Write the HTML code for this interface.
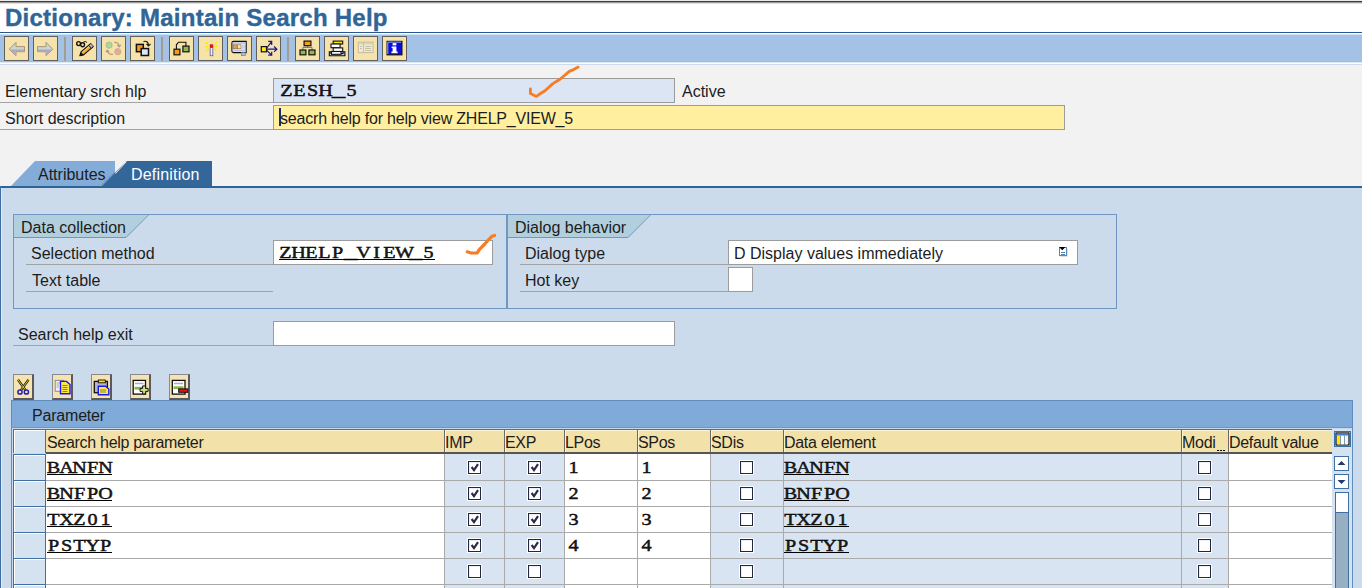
<!DOCTYPE html>
<html><head><meta charset="utf-8">
<style>
html,body{margin:0;padding:0}
body{width:1362px;height:588px;position:relative;overflow:hidden;background:#f2f2f2;font-family:"Liberation Sans",sans-serif;font-size:16px;color:#1c1c1c}
.a{position:absolute}
.t{position:absolute;line-height:20px;white-space:nowrap}
.m{position:absolute;line-height:20px;white-space:nowrap;font-family:"Liberation Serif",serif;font-weight:normal;font-size:17.5px;-webkit-text-stroke:0.45px #000}
.m span{display:inline-block;width:13px;text-align:center;transform:scaleX(1.15)}
.m span.us{transform:scaleX(1.5)}
.mu{position:absolute;height:1px;background:#000}
.u{text-decoration:underline;text-underline-offset:2px;text-decoration-thickness:1px}
.btn{position:absolute;top:36px;width:23px;height:23px;border:1px solid #5f5f5f;background:#f5e3ab}
.btn svg{position:absolute;left:0;top:0}
.sep{position:absolute;top:37px;width:2px;height:24px;background:#a39c93}
.ul{position:absolute;height:1px;background:#a3a3a3}
.fld{position:absolute;box-sizing:border-box;border:1px solid #9c9c9c;background:#fff}
.gb{position:absolute;box-sizing:border-box;border:1px solid #6f97c1}
.tb{position:absolute;top:374px;width:19px;height:24px;border-top:1px solid #8a8a8a;border-left:1px solid #8a8a8a;border-right:2px solid #5a5a5a;border-bottom:2px solid #5a5a5a;background:#f5e3b5;box-sizing:content-box;width:18px;height:23px}
</style></head><body>
<!-- title bar -->
<div class="a" style="left:0;top:0;width:1362px;height:32px;background:#fff"></div>
<div class="a" style="left:0;top:0;width:1362px;height:1px;background:#ececec"></div>
<div class="a" style="left:0;top:1px;width:1362px;height:1px;background:#3c3c3c"></div>
<div class="a" style="left:0;top:2px;width:1362px;height:1px;background:#9c9c9c"></div>
<div class="a" style="left:0;top:3px;width:1362px;height:1px;background:#dedede"></div>
<div class="t" style="left:5px;top:4px;font-size:24px;line-height:28px;font-weight:bold;color:#2f6597;letter-spacing:0.25px;-webkit-text-stroke:0.4px #2f6597">Dictionary: Maintain Search Help</div>
<div class="a" style="left:0;top:32px;width:1362px;height:1px;background:#235890"></div>
<div class="a" style="left:0;top:33px;width:1362px;height:1px;background:#ffffff"></div>
<div class="a" style="left:0;top:34px;width:1362px;height:1px;background:#d0ddee"></div>
<div class="a" style="left:0;top:35px;width:1362px;height:26px;background:#a4c2e6"></div>
<div class="a" style="left:0;top:61px;width:1362px;height:1px;background:#a0bee3"></div>
<div class="a" style="left:0;top:62px;width:1362px;height:1px;background:#dde8f3"></div>
<div class="a" style="left:0;top:63px;width:1362px;height:1px;background:#ffffff"></div>
<div class="a" style="left:0;top:64px;width:1362px;height:1px;background:#cddbea"></div>

<!-- toolbar -->
<div class="btn" style="left:4px"><svg width="23" height="23" viewBox="0 0 23 23"><path d="M4.2 12.2 L11 5.3 V9.6 H19.5 V14.7 H11 V18.7 Z" fill="#c8d8c4" stroke="#a8987a" stroke-width="1"/><path d="M5 12.4 L10.5 17.9 V14.2 H19 V12.4 Z" fill="#b4a4cc"/></svg></div>
<div class="btn" style="left:33px"><svg width="23" height="23" viewBox="0 0 23 23"><path d="M18.8 12.2 L12 5.3 V9.6 H3.5 V14.7 H12 V18.7 Z" fill="#c8d8c4" stroke="#a8987a" stroke-width="1"/><path d="M18 12.4 L12.5 17.9 V14.2 H4 V12.4 Z" fill="#b4a4cc"/></svg></div>
<div class="btn" style="left:72px"><svg width="23" height="23" viewBox="0 0 23 23"><path d="M6.8 18.8 L8 14.9 L17.6 6.6 L20.2 9.6 L10.6 17.9 Z" fill="#f6a623" stroke="#111" stroke-width="1.1" stroke-linejoin="round"/><path d="M6.8 18.8 L8 14.9 L10.6 17.9 Z" fill="#111"/><path d="M9 15.6 L17.8 8" stroke="#ffd890" stroke-width="0.9"/><path d="M15.8 8.2 L17.6 6.6 L20.2 9.6 L18.4 11.2 Z" fill="#c0c8f0" stroke="#111" stroke-width="1"/><path d="M17.6 6.6 L20.2 9.6 L20.8 9 L18.2 6Z" fill="#f08080"/><ellipse cx="5.6" cy="6.6" rx="1.9" ry="2" fill="none" stroke="#111" stroke-width="1.4"/><ellipse cx="9.6" cy="7.8" rx="1.9" ry="2" fill="none" stroke="#111" stroke-width="1.4"/><path d="M10.5 5 Q12.5 3.8 14 5.5" fill="none" stroke="#111" stroke-width="1"/></svg></div>
<div class="btn" style="left:101px"><svg width="23" height="23" viewBox="0 0 23 23"><circle cx="7.1" cy="8.1" r="3.1" fill="#a8dc90" stroke="#b8b098" stroke-width="0.9"/><circle cx="15.8" cy="14.7" r="3.1" fill="#f0a890" stroke="#b8b098" stroke-width="0.9"/><path d="M12.3 5.4 Q16.8 5 17.1 9.2 M15.4 7.9 L17.1 9.8 L18.8 7.9 M10.9 17.4 Q5.8 17.6 5.4 13.8 M3.8 15.2 L5.4 13.3 L7 15.2" fill="none" stroke="#a89c80" stroke-width="1.2"/></svg></div>
<div class="btn" style="left:130px"><svg width="23" height="23" viewBox="0 0 23 23"><rect x="5.4" y="7.4" width="6.9" height="7.3" fill="#f69a1a" stroke="#111" stroke-width="1.5"/><rect x="10.2" y="11.6" width="7.3" height="6.9" fill="#dce8f8" stroke="#111" stroke-width="1.5"/><path d="M12.5 4.5 Q17 3 17.5 8.5 M15.5 6.8 L17.5 9 L19.5 6.8" fill="none" stroke="#111" stroke-width="1.1"/></svg></div>
<div class="btn" style="left:169px"><svg width="23" height="23" viewBox="0 0 23 23"><rect x="4" y="12.2" width="5.9" height="5.6" fill="#f39a1e" stroke="#111" stroke-width="1.2"/><rect x="12.9" y="9.1" width="6.1" height="5.7" fill="#8cba52" stroke="#111" stroke-width="1.2"/><path d="M6.4 12.2 V7.8 L8.5 5.2 H15.9 V9.1" fill="none" stroke="#111" stroke-width="1.1"/></svg></div>
<div class="btn" style="left:198px"><svg width="23" height="23" viewBox="0 0 23 23"><path d="M12.5 3.5 V6.5 M7 5 L9.3 7.3 M18 5 L15.7 7.3 M6.5 9.5 H9.5 M15.5 9.5 H18.5 M7.5 13.8 L9.7 11.8 M17.5 13.8 L15.3 11.8" stroke="#ffea00" stroke-width="1.3"/><rect x="11.2" y="7.8" width="2.6" height="10.9" fill="#f0f0ff" stroke="#6a6aa0" stroke-width="0.9"/><rect x="11" y="7.6" width="3" height="3.3" fill="#e81010"/></svg></div>
<div class="btn" style="left:227px"><svg width="23" height="23" viewBox="0 0 23 23"><path d="M5.5 4.4 H18.2 V15.6 H5.5 Q3.9 15.6 3.9 14 V6 Q3.9 4.4 5.5 4.4Z" fill="#eef2fa" stroke="#111" stroke-width="1.1"/><rect x="4.8" y="5.3" width="12.6" height="1.8" fill="#b8c4e0"/><rect x="5.2" y="7.8" width="3.9" height="3.9" fill="#f0a040" stroke="#8a6a40" stroke-width="0.6"/><rect x="9.6" y="7.8" width="3.4" height="3.9" fill="#f4e0b0" stroke="#8a6a40" stroke-width="0.6"/><rect x="13.6" y="7.8" width="3.4" height="3.9" fill="#c8d0f0"/><rect x="4.8" y="12.5" width="12.6" height="2" fill="#b8c4e0"/><rect x="13.4" y="15.6" width="3.9" height="3.1" fill="#a8b8e0" stroke="#6a7aa0" stroke-width="0.6"/></svg></div>
<div class="btn" style="left:256px"><svg width="23" height="23" viewBox="0 0 23 23"><rect x="4.3" y="9.6" width="5.2" height="5.2" fill="#ffee10" stroke="#111" stroke-width="1.2"/><path d="M9.5 12.2 H19.9 M17 9.5 L19.9 12.2 L17 14.9 M9.8 11 L14.7 4.4 M11.2 4.4 H14.7 V8 M9.8 13.4 L14.7 18.2 M11.2 18.2 H14.7 V14.7" fill="none" stroke="#1a1a90" stroke-width="1.2"/></svg></div>
<div class="btn" style="left:295px"><svg width="23" height="23" viewBox="0 0 23 23"><path d="M11.5 8.7 V10.4 M6.9 13 V10.4 H16 V13" fill="none" stroke="#777" stroke-width="1"/><rect x="8.1" y="4.1" width="6.8" height="4.6" fill="#f3a020" stroke="#111" stroke-width="1.2"/><rect x="4" y="13" width="5.9" height="4.8" fill="#8cba52" stroke="#111" stroke-width="1.2"/><rect x="12.9" y="13" width="6.1" height="4.8" fill="#8cba52" stroke="#111" stroke-width="1.2"/></svg></div>
<div class="btn" style="left:324px"><svg width="23" height="23" viewBox="0 0 23 23"><path d="M4.3 14.8 H6 V16.5 H18 V14.8 H19.9 V18.7 H4.3 Z" fill="#9fd0f0" stroke="#111" stroke-width="1.1"/><rect x="8.2" y="4.1" width="9.5" height="2.9" fill="#ffe800" stroke="#111" stroke-width="1.1"/><rect x="6" y="7" width="9.1" height="3.7" fill="#fff" stroke="#111" stroke-width="1.1"/><rect x="8.2" y="10.9" width="9.5" height="3.6" fill="#fff" stroke="#111" stroke-width="1.1"/><rect x="6.5" y="14.5" width="9.5" height="2.8" fill="#fff" stroke="#111" stroke-width="1.1"/></svg></div>
<div class="btn" style="left:353px"><svg width="23" height="23" viewBox="0 0 23 23"><rect x="4.3" y="5.2" width="14.7" height="10.4" fill="#f2e8cc" stroke="#c4baa0" stroke-width="1"/><path d="M4.8 6.8 H18.5" stroke="#c8d4d0" stroke-width="1.2"/><path d="M9.5 5.2 V15.6 M11 9.5 H17 M11 11.5 H17 M11 13.5 H17 M6 9.5 H8 M6 11.5 H8" stroke="#c4baa0" stroke-width="0.9"/></svg></div>
<div class="btn" style="left:382px"><svg width="23" height="23" viewBox="0 0 23 23"><rect x="4.1" y="4.4" width="14.8" height="13.4" fill="#0a0ae0" stroke="#111" stroke-width="1.2"/><path d="M4.8 5.1 H18.2 M4.8 5.1 V17" stroke="#a0c8f0" stroke-width="0.9"/><rect x="9.6" y="6.1" width="3.8" height="2.3" fill="#fff"/><path d="M8.6 9.6 H13.4 V14.6 H14.6 V16.2 H8.4 V14.6 H9.6 V11 H8.6Z" fill="#fff"/></svg></div>
<div class="sep" style="left:64px"></div>
<div class="sep" style="left:161px"></div>
<div class="sep" style="left:287px"></div>


<!-- header fields -->
<div class="t" style="left:5px;top:82px">Elementary srch hlp</div>
<div class="ul" style="left:0;top:102px;width:273px"></div>
<div class="t" style="left:5px;top:109px">Short description</div>
<div class="ul" style="left:0;top:129px;width:273px"></div>
<div class="fld" style="left:273px;top:78px;width:402px;height:25px;background:#dbe5f3"></div>
<div class="m" style="left:280px;top:80px"><span>Z</span><span>E</span><span>S</span><span>H</span><span class="us">_</span><span>5</span></div>
<div class="t" style="left:682px;top:82px">Active</div>
<div class="fld" style="left:273px;top:105px;width:792px;height:25px;background:#ffef9f"></div>
<div class="a" style="left:279px;top:108px;width:2px;height:18px;background:#1c2a7a"></div>
<div class="t" style="left:280px;top:109px;letter-spacing:-0.2px">seacrh help for help view ZHELP_VIEW_5</div>

<!-- tabs -->
<svg class="a" style="left:0;top:160px" width="230" height="30">
<polygon points="11,26 35,1 115,1 115,26" fill="#83acd9"/>
<polygon points="102,26 126.5,1 212,1 212,26" fill="#336699"/>
<line x1="115.5" y1="13.5" x2="126.5" y2="1.5" stroke="#fff" stroke-width="1" opacity="0.9"/>
<line x1="101.5" y1="25" x2="113.5" y2="13" stroke="#3a4a60" stroke-width="0.8" stroke-dasharray="1 1" opacity="0.7"/>
</svg>
<div class="t" style="left:38px;top:165px">Attributes</div>
<div class="t" style="left:131px;top:165px;color:#fff;letter-spacing:0.2px">Definition</div>

<!-- content area -->
<div class="a" style="left:0;top:186px;width:1362px;height:402px;background:#ccdbeb"></div>
<div class="a" style="left:0;top:186px;width:1362px;height:2px;background:#2f6595"></div>
<div class="a" style="left:0;top:186px;width:1px;height:402px;background:#3f70a2"></div><div class="a" style="left:1px;top:188px;width:1px;height:400px;background:#dfe8f3"></div>

<!-- group 1 -->
<div class="gb" style="left:13px;top:214px;width:494px;height:95px"></div>
<svg class="a" style="left:13px;top:214px" width="200" height="26">
<polygon points="1,1 135,1 113,23.5 1,23.5" fill="#b2cfdd"/>
<polyline points="0,23.5 113,23.5 135.5,1" fill="none" stroke="#6f97c1" stroke-width="1"/>
</svg>
<div class="t" style="left:21px;top:218px">Data collection</div>
<div class="t" style="left:31px;top:244px">Selection method</div>
<div class="ul" style="left:26px;top:264px;width:247px"></div>
<div class="t" style="left:32px;top:271px">Text table</div>
<div class="ul" style="left:26px;top:291px;width:247px"></div>
<div class="fld" style="left:273px;top:240px;width:220px;height:25px"></div>
<div class="m" style="left:279px;top:242px"><span>Z</span><span>H</span><span>E</span><span>L</span><span>P</span><span class="us">_</span><span>V</span><span>I</span><span>E</span><span>W</span><span class="us">_</span><span>5</span></div><div class="mu" style="left:279px;top:259px;width:156px"></div>

<!-- group 2 -->
<div class="gb" style="left:507px;top:214px;width:610px;height:95px"></div>
<svg class="a" style="left:507px;top:214px" width="200" height="26">
<polygon points="1,1 143,1 121,23.5 1,23.5" fill="#b2cfdd"/>
<polyline points="0,23.5 121,23.5 143.5,1" fill="none" stroke="#6f97c1" stroke-width="1"/>
</svg>
<div class="t" style="left:515px;top:218px">Dialog behavior</div>
<div class="t" style="left:525px;top:244px">Dialog type</div>
<div class="ul" style="left:520px;top:264px;width:208px"></div>
<div class="t" style="left:525px;top:271px">Hot key</div>
<div class="ul" style="left:520px;top:291px;width:208px"></div>
<div class="fld" style="left:728px;top:240px;width:350px;height:25px"></div>
<div class="t" style="left:734px;top:244px">D Display values immediately</div>
<svg class="a" style="left:1057px;top:246px" width="14" height="14"><rect x="3.5" y="2.5" width="7" height="8" fill="#888" opacity="0.5"/><rect x="2.5" y="1.5" width="7" height="8" fill="#fff" stroke="#5a86b8" stroke-width="1"/><path d="M4 6.5 H8 M4 8.5 H8" stroke="#5a86b8" stroke-width="1"/><path d="M2 1 H8.5 L5.3 4.3Z" fill="#000"/></svg>
<div class="fld" style="left:728px;top:267px;width:25px;height:25px"></div>

<!-- search help exit -->
<div class="t" style="left:18px;top:325px">Search help exit</div>
<div class="ul" style="left:13px;top:345px;width:260px"></div>
<div class="fld" style="left:273px;top:321px;width:402px;height:25px"></div>

<div class="tb" style="left:13px"><svg width="18" height="23" viewBox="0 0 18 23" style="position:absolute;left:0;top:0;overflow:visible"><path d="M4 4.8 L11.6 15.2 M14.5 4.8 L6.9 15.2" stroke="#1a1a1a" stroke-width="2.3" fill="none"/><path d="M4 4.8 L11.6 15.2 M14.5 4.8 L6.9 15.2" stroke="#f4e400" stroke-width="0.9" fill="none"/><circle cx="6" cy="17" r="2.1" fill="#fff" fill-opacity="0" stroke="#2222a8" stroke-width="1.5"/><circle cx="12.4" cy="17" r="2.1" fill="none" stroke="#2222a8" stroke-width="1.5"/></svg></div>
<div class="tb" style="left:52px"><svg width="18" height="23" viewBox="0 0 18 23" style="position:absolute;left:0;top:0;overflow:visible"><rect x="2.2" y="5.4" width="8.5" height="10.9" fill="#f0f0f4" stroke="#8a8a8a" stroke-width="1"/><path d="M3.5 8 H9 M3.5 10 H6 M3.5 12 H6" stroke="#9a9a9a" stroke-width="0.8"/><path d="M7.5 6.4 H13.5 L17 9.6 V18.8 H7.5 Z" fill="#ffe840" stroke="#1a1ae8" stroke-width="1.4"/><path d="M9.5 10.5 H14.5 M9.5 12.5 H14.5 M9.5 14.5 H14.5 M9.5 16.5 H14.5" stroke="#555" stroke-width="0.7"/></svg></div>
<div class="tb" style="left:91px"><svg width="18" height="23" viewBox="0 0 18 23" style="position:absolute;left:0;top:0;overflow:visible"><rect x="2.3" y="6.4" width="13.1" height="11.3" fill="#b4b4dc" stroke="#111" stroke-width="1.3"/><rect x="6.3" y="5" width="7" height="2.8" fill="#ffe000" stroke="#111" stroke-width="0.9"/><path d="M6.3 11.3 H13.5 L16.8 14 V19.8 H6.3 Z" fill="#ffe840" stroke="#1a1ae8" stroke-width="1.4"/><path d="M8 15 H14 M8 17 H14" stroke="#555" stroke-width="0.7"/></svg></div>
<div class="tb" style="left:130px"><svg width="18" height="23" viewBox="0 0 18 23" style="position:absolute;left:0;top:0;overflow:visible"><rect x="2.2" y="5.4" width="12.3" height="13.7" fill="#fff" stroke="#111" stroke-width="1.3"/><path d="M4 8.5 H12.5" stroke="#a8a8d8" stroke-width="1.5"/><rect x="3.5" y="11.8" width="10" height="2.8" fill="#8ab848"/><path d="M11.6 10.9 H14.6 V13.4 H17.1 V16.4 H14.6 V18.9 H11.6 V16.4 H9.1 V13.4 H11.6 Z" fill="#c8e488" stroke="#111" stroke-width="1"/></svg></div>
<div class="tb" style="left:169px"><svg width="18" height="23" viewBox="0 0 18 23" style="position:absolute;left:0;top:0;overflow:visible"><rect x="2.3" y="5.4" width="12.7" height="13.7" fill="#fff" stroke="#111" stroke-width="1.3"/><path d="M4 8.5 H13" stroke="#a8a8d8" stroke-width="1.5"/><rect x="3.5" y="11.3" width="10" height="2.8" fill="#8ab848"/><rect x="8.7" y="13.9" width="9.1" height="3.4" fill="#e81010" stroke="#111" stroke-width="1"/></svg></div>

<div class="a" style="left:11px;top:400px;width:1342px;height:28px;background:#80aad7;border-top:1px solid #5f8dbd;border-left:1px solid #5f8dbd;border-right:1px solid #5f8dbd;box-sizing:border-box"></div><div class="a" style="left:11px;top:427px;width:1342px;height:1px;background:#6f96c2"></div><div class="a" style="left:11px;top:428px;width:1342px;height:1px;background:#c6d8ec"></div><div class="t" style="left:32px;top:406px;letter-spacing:-0.2px">Parameter</div><div class="a" style="left:11px;top:428px;width:1px;height:160px;background:#5f8dbd"></div><div class="a" style="left:1352px;top:428px;width:1px;height:160px;background:#5f8dbd"></div><div class="a" style="left:46px;top:429px;width:1286px;height:23px;background:#f3e1aa;border-top:1px solid #6a6a6a;box-sizing:border-box;box-shadow:inset 0 1px 0 #fcf4d4"></div><div class="a" style="left:46px;top:452px;width:1286px;height:2px;background:#555"></div><div class="t" style="left:47px;top:433px;letter-spacing:-0.3px">Search help parameter</div><div class="a" style="left:444px;top:429px;width:1px;height:23px;background:#6a6a6a"></div><div class="a" style="left:445px;top:430px;width:1px;height:22px;background:#fcf4d4"></div><div class="t" style="left:445px;top:433px;letter-spacing:-0.3px">IMP</div><div class="a" style="left:504px;top:429px;width:1px;height:23px;background:#6a6a6a"></div><div class="a" style="left:505px;top:430px;width:1px;height:22px;background:#fcf4d4"></div><div class="t" style="left:505px;top:433px;letter-spacing:-0.3px">EXP</div><div class="a" style="left:564px;top:429px;width:1px;height:23px;background:#6a6a6a"></div><div class="a" style="left:565px;top:430px;width:1px;height:22px;background:#fcf4d4"></div><div class="t" style="left:565px;top:433px;letter-spacing:-0.3px">LPos</div><div class="a" style="left:637px;top:429px;width:1px;height:23px;background:#6a6a6a"></div><div class="a" style="left:638px;top:430px;width:1px;height:22px;background:#fcf4d4"></div><div class="t" style="left:638px;top:433px;letter-spacing:-0.3px">SPos</div><div class="a" style="left:710px;top:429px;width:1px;height:23px;background:#6a6a6a"></div><div class="a" style="left:711px;top:430px;width:1px;height:22px;background:#fcf4d4"></div><div class="t" style="left:711px;top:433px;letter-spacing:-0.3px">SDis</div><div class="a" style="left:783px;top:429px;width:1px;height:23px;background:#6a6a6a"></div><div class="a" style="left:784px;top:430px;width:1px;height:22px;background:#fcf4d4"></div><div class="t" style="left:784px;top:433px;letter-spacing:-0.3px">Data element</div><div class="a" style="left:1181px;top:429px;width:1px;height:23px;background:#6a6a6a"></div><div class="a" style="left:1182px;top:430px;width:1px;height:22px;background:#fcf4d4"></div><div class="t" style="left:1182px;top:433px;letter-spacing:-0.3px">Modi</div><div class="a" style="left:1228px;top:429px;width:1px;height:23px;background:#6a6a6a"></div><div class="a" style="left:1229px;top:430px;width:1px;height:22px;background:#fcf4d4"></div><div class="t" style="left:1229px;top:433px;letter-spacing:-0.3px">Default value</div><div class="a" style="left:1217px;top:450px;width:2px;height:1px;background:#000"></div><div class="a" style="left:1220px;top:450px;width:2px;height:1px;background:#000"></div><div class="a" style="left:1223px;top:450px;width:2px;height:1px;background:#000"></div><div class="a" style="left:13px;top:429px;width:33px;height:24px;box-sizing:border-box;background:#d5e2f0;border-left:1px solid #3f70a2;border-top:1px solid #3f70a2;border-right:1px solid #3f70a2;box-shadow:inset 1px 1px 0 #fff"></div><div class="a" style="left:46px;top:454px;width:398px;height:134px;background:#fff"></div><div class="a" style="left:444px;top:454px;width:60px;height:134px;background:#d8e4f2"></div><div class="a" style="left:504px;top:454px;width:60px;height:134px;background:#d8e4f2"></div><div class="a" style="left:564px;top:454px;width:73px;height:134px;background:#fff"></div><div class="a" style="left:637px;top:454px;width:73px;height:134px;background:#fff"></div><div class="a" style="left:710px;top:454px;width:73px;height:134px;background:#d8e4f2"></div><div class="a" style="left:783px;top:454px;width:398px;height:134px;background:#d8e4f2"></div><div class="a" style="left:1181px;top:454px;width:47px;height:134px;background:#d8e4f2"></div><div class="a" style="left:1228px;top:454px;width:104px;height:134px;background:#fff"></div><div class="a" style="left:444px;top:454px;width:1px;height:134px;background:#aaaaaa"></div><div class="a" style="left:504px;top:454px;width:1px;height:134px;background:#aaaaaa"></div><div class="a" style="left:564px;top:454px;width:1px;height:134px;background:#aaaaaa"></div><div class="a" style="left:637px;top:454px;width:1px;height:134px;background:#aaaaaa"></div><div class="a" style="left:710px;top:454px;width:1px;height:134px;background:#aaaaaa"></div><div class="a" style="left:783px;top:454px;width:1px;height:134px;background:#aaaaaa"></div><div class="a" style="left:1181px;top:454px;width:1px;height:134px;background:#aaaaaa"></div><div class="a" style="left:1228px;top:454px;width:1px;height:134px;background:#aaaaaa"></div><div class="a" style="left:1332px;top:454px;width:1px;height:134px;background:#aaaaaa"></div><div class="a" style="left:46px;top:480px;width:1286px;height:1px;background:#aaaaaa"></div><div class="a" style="left:46px;top:506px;width:1286px;height:1px;background:#aaaaaa"></div><div class="a" style="left:46px;top:532px;width:1286px;height:1px;background:#aaaaaa"></div><div class="a" style="left:46px;top:558px;width:1286px;height:1px;background:#aaaaaa"></div><div class="a" style="left:46px;top:584px;width:1286px;height:1px;background:#aaaaaa"></div><div class="a" style="left:13px;top:454px;width:33px;height:26px;box-sizing:border-box;background:#d5e2f0;border-left:1px solid #3f70a2;border-top:1px solid #3f70a2;border-right:1px solid #3f70a2;box-shadow:inset 1px 1px 0 #fff"></div><div class="a" style="left:468px;top:461px;width:13px;height:13px;box-sizing:border-box;border:1px solid #25253f;background:#fff;box-shadow:0 0 0 1px #fff, inset 1px 1px 0 #e8f0fa"><svg width="11" height="11" style="position:absolute;left:0;top:0"><path d="M2.6 5 L5 8.2 L9 2.2" fill="none" stroke="#2b2b4a" stroke-width="2.2"/></svg></div><div class="a" style="left:528px;top:461px;width:13px;height:13px;box-sizing:border-box;border:1px solid #25253f;background:#fff;box-shadow:0 0 0 1px #fff, inset 1px 1px 0 #e8f0fa"><svg width="11" height="11" style="position:absolute;left:0;top:0"><path d="M2.6 5 L5 8.2 L9 2.2" fill="none" stroke="#2b2b4a" stroke-width="2.2"/></svg></div><div class="a" style="left:740px;top:461px;width:13px;height:13px;box-sizing:border-box;border:1px solid #25253f;background:#fff;box-shadow:0 0 0 1px #fff, inset 1px 1px 0 #e8f0fa"></div><div class="a" style="left:1198px;top:461px;width:13px;height:13px;box-sizing:border-box;border:1px solid #25253f;background:#fff;box-shadow:0 0 0 1px #fff, inset 1px 1px 0 #e8f0fa"></div><div class="m" style="left:47px;top:457px"><span>B</span><span>A</span><span>N</span><span>F</span><span>N</span></div><div class="mu" style="left:47px;top:474px;width:65px"></div><div class="m" style="left:784px;top:457px"><span>B</span><span>A</span><span>N</span><span>F</span><span>N</span></div><div class="mu" style="left:784px;top:474px;width:65px"></div><div class="m" style="left:567px;top:457px"><span>1</span></div><div class="m" style="left:640px;top:457px"><span>1</span></div><div class="a" style="left:13px;top:480px;width:33px;height:26px;box-sizing:border-box;background:#d5e2f0;border-left:1px solid #3f70a2;border-top:1px solid #3f70a2;border-right:1px solid #3f70a2;box-shadow:inset 1px 1px 0 #fff"></div><div class="a" style="left:468px;top:487px;width:13px;height:13px;box-sizing:border-box;border:1px solid #25253f;background:#fff;box-shadow:0 0 0 1px #fff, inset 1px 1px 0 #e8f0fa"><svg width="11" height="11" style="position:absolute;left:0;top:0"><path d="M2.6 5 L5 8.2 L9 2.2" fill="none" stroke="#2b2b4a" stroke-width="2.2"/></svg></div><div class="a" style="left:528px;top:487px;width:13px;height:13px;box-sizing:border-box;border:1px solid #25253f;background:#fff;box-shadow:0 0 0 1px #fff, inset 1px 1px 0 #e8f0fa"><svg width="11" height="11" style="position:absolute;left:0;top:0"><path d="M2.6 5 L5 8.2 L9 2.2" fill="none" stroke="#2b2b4a" stroke-width="2.2"/></svg></div><div class="a" style="left:740px;top:487px;width:13px;height:13px;box-sizing:border-box;border:1px solid #25253f;background:#fff;box-shadow:0 0 0 1px #fff, inset 1px 1px 0 #e8f0fa"></div><div class="a" style="left:1198px;top:487px;width:13px;height:13px;box-sizing:border-box;border:1px solid #25253f;background:#fff;box-shadow:0 0 0 1px #fff, inset 1px 1px 0 #e8f0fa"></div><div class="m" style="left:47px;top:483px"><span>B</span><span>N</span><span>F</span><span>P</span><span>O</span></div><div class="mu" style="left:47px;top:500px;width:65px"></div><div class="m" style="left:784px;top:483px"><span>B</span><span>N</span><span>F</span><span>P</span><span>O</span></div><div class="mu" style="left:784px;top:500px;width:65px"></div><div class="m" style="left:567px;top:483px"><span>2</span></div><div class="m" style="left:640px;top:483px"><span>2</span></div><div class="a" style="left:13px;top:506px;width:33px;height:26px;box-sizing:border-box;background:#d5e2f0;border-left:1px solid #3f70a2;border-top:1px solid #3f70a2;border-right:1px solid #3f70a2;box-shadow:inset 1px 1px 0 #fff"></div><div class="a" style="left:468px;top:513px;width:13px;height:13px;box-sizing:border-box;border:1px solid #25253f;background:#fff;box-shadow:0 0 0 1px #fff, inset 1px 1px 0 #e8f0fa"><svg width="11" height="11" style="position:absolute;left:0;top:0"><path d="M2.6 5 L5 8.2 L9 2.2" fill="none" stroke="#2b2b4a" stroke-width="2.2"/></svg></div><div class="a" style="left:528px;top:513px;width:13px;height:13px;box-sizing:border-box;border:1px solid #25253f;background:#fff;box-shadow:0 0 0 1px #fff, inset 1px 1px 0 #e8f0fa"><svg width="11" height="11" style="position:absolute;left:0;top:0"><path d="M2.6 5 L5 8.2 L9 2.2" fill="none" stroke="#2b2b4a" stroke-width="2.2"/></svg></div><div class="a" style="left:740px;top:513px;width:13px;height:13px;box-sizing:border-box;border:1px solid #25253f;background:#fff;box-shadow:0 0 0 1px #fff, inset 1px 1px 0 #e8f0fa"></div><div class="a" style="left:1198px;top:513px;width:13px;height:13px;box-sizing:border-box;border:1px solid #25253f;background:#fff;box-shadow:0 0 0 1px #fff, inset 1px 1px 0 #e8f0fa"></div><div class="m" style="left:47px;top:509px"><span>T</span><span>X</span><span>Z</span><span>0</span><span>1</span></div><div class="mu" style="left:47px;top:526px;width:65px"></div><div class="m" style="left:784px;top:509px"><span>T</span><span>X</span><span>Z</span><span>0</span><span>1</span></div><div class="mu" style="left:784px;top:526px;width:65px"></div><div class="m" style="left:567px;top:509px"><span>3</span></div><div class="m" style="left:640px;top:509px"><span>3</span></div><div class="a" style="left:13px;top:532px;width:33px;height:26px;box-sizing:border-box;background:#d5e2f0;border-left:1px solid #3f70a2;border-top:1px solid #3f70a2;border-right:1px solid #3f70a2;box-shadow:inset 1px 1px 0 #fff"></div><div class="a" style="left:468px;top:539px;width:13px;height:13px;box-sizing:border-box;border:1px solid #25253f;background:#fff;box-shadow:0 0 0 1px #fff, inset 1px 1px 0 #e8f0fa"><svg width="11" height="11" style="position:absolute;left:0;top:0"><path d="M2.6 5 L5 8.2 L9 2.2" fill="none" stroke="#2b2b4a" stroke-width="2.2"/></svg></div><div class="a" style="left:528px;top:539px;width:13px;height:13px;box-sizing:border-box;border:1px solid #25253f;background:#fff;box-shadow:0 0 0 1px #fff, inset 1px 1px 0 #e8f0fa"><svg width="11" height="11" style="position:absolute;left:0;top:0"><path d="M2.6 5 L5 8.2 L9 2.2" fill="none" stroke="#2b2b4a" stroke-width="2.2"/></svg></div><div class="a" style="left:740px;top:539px;width:13px;height:13px;box-sizing:border-box;border:1px solid #25253f;background:#fff;box-shadow:0 0 0 1px #fff, inset 1px 1px 0 #e8f0fa"></div><div class="a" style="left:1198px;top:539px;width:13px;height:13px;box-sizing:border-box;border:1px solid #25253f;background:#fff;box-shadow:0 0 0 1px #fff, inset 1px 1px 0 #e8f0fa"></div><div class="m" style="left:47px;top:535px"><span>P</span><span>S</span><span>T</span><span>Y</span><span>P</span></div><div class="mu" style="left:47px;top:552px;width:65px"></div><div class="m" style="left:784px;top:535px"><span>P</span><span>S</span><span>T</span><span>Y</span><span>P</span></div><div class="mu" style="left:784px;top:552px;width:65px"></div><div class="m" style="left:567px;top:535px"><span>4</span></div><div class="m" style="left:640px;top:535px"><span>4</span></div><div class="a" style="left:13px;top:558px;width:33px;height:26px;box-sizing:border-box;background:#d5e2f0;border-left:1px solid #3f70a2;border-top:1px solid #3f70a2;border-right:1px solid #3f70a2;box-shadow:inset 1px 1px 0 #fff"></div><div class="a" style="left:468px;top:565px;width:13px;height:13px;box-sizing:border-box;border:1px solid #25253f;background:#fff;box-shadow:0 0 0 1px #fff, inset 1px 1px 0 #e8f0fa"></div><div class="a" style="left:528px;top:565px;width:13px;height:13px;box-sizing:border-box;border:1px solid #25253f;background:#fff;box-shadow:0 0 0 1px #fff, inset 1px 1px 0 #e8f0fa"></div><div class="a" style="left:740px;top:565px;width:13px;height:13px;box-sizing:border-box;border:1px solid #25253f;background:#fff;box-shadow:0 0 0 1px #fff, inset 1px 1px 0 #e8f0fa"></div><div class="a" style="left:1198px;top:565px;width:13px;height:13px;box-sizing:border-box;border:1px solid #25253f;background:#fff;box-shadow:0 0 0 1px #fff, inset 1px 1px 0 #e8f0fa"></div><div class="a" style="left:13px;top:584px;width:33px;height:26px;box-sizing:border-box;background:#d5e2f0;border-left:1px solid #3f70a2;border-top:1px solid #3f70a2;border-right:1px solid #3f70a2;box-shadow:inset 1px 1px 0 #fff"></div><div class="a" style="left:468px;top:591px;width:13px;height:13px;box-sizing:border-box;border:1px solid #25253f;background:#fff;box-shadow:0 0 0 1px #fff, inset 1px 1px 0 #e8f0fa"></div><div class="a" style="left:528px;top:591px;width:13px;height:13px;box-sizing:border-box;border:1px solid #25253f;background:#fff;box-shadow:0 0 0 1px #fff, inset 1px 1px 0 #e8f0fa"></div><div class="a" style="left:740px;top:591px;width:13px;height:13px;box-sizing:border-box;border:1px solid #25253f;background:#fff;box-shadow:0 0 0 1px #fff, inset 1px 1px 0 #e8f0fa"></div><div class="a" style="left:1198px;top:591px;width:13px;height:13px;box-sizing:border-box;border:1px solid #25253f;background:#fff;box-shadow:0 0 0 1px #fff, inset 1px 1px 0 #e8f0fa"></div><div class="a" style="left:1332px;top:429px;width:20px;height:159px;background:#d5e2f0"></div><div class="a" style="left:1334px;top:431px;width:17px;height:16px;background:#fff;border:1px solid #3f70a2;box-sizing:border-box"><svg width="15" height="14" style="position:absolute;left:0;top:0"><rect x="1" y="1" width="13" height="12" fill="#fff" stroke="#000" stroke-width="1.2"/><rect x="1.6" y="1.6" width="11.8" height="2" fill="#4a80c8"/><rect x="2" y="4" width="3.3" height="8.4" fill="#ffe800"/><path d="M5.6 3.6 V12.4 M9.4 3.6 V12.4" stroke="#7090b0" stroke-width="1"/><rect x="6.2" y="4" width="2.6" height="8.4" fill="#fff"/><rect x="10" y="4" width="3" height="8.4" fill="#f4f4f4"/></svg></div><div class="a" style="left:1334px;top:456px;width:15px;height:15px;background:#fff;border:1px solid #3f70a2;box-sizing:border-box"><svg width="13" height="13" style="position:absolute;left:0;top:0"><path d="M2.5 8 L6.5 4 L10.5 8Z" fill="#223a6a"/></svg></div><div class="a" style="left:1334px;top:474px;width:15px;height:15px;background:#fff;border:1px solid #3f70a2;box-sizing:border-box"><svg width="13" height="13" style="position:absolute;left:0;top:0"><path d="M2.5 5 L6.5 9 L10.5 5Z" fill="#223a6a"/></svg></div><div class="a" style="left:1335px;top:492px;width:14px;height:96px;background:#98afc3;border-left:1px solid #3f70a2;border-right:1px solid #3f70a2;box-sizing:border-box"></div><div class="a" style="left:1335px;top:492px;width:14px;height:21px;background:#fff;border:1px solid #3f70a2;border-bottom:1px solid #3f70a2;box-sizing:border-box"></div>

<svg class="a" style="left:0;top:0;pointer-events:none" width="1362" height="588">
<path d="M530.4 88.9 L530.4 93.6 L536.4 96.4 L539.3 94.3 L545 90.7 L552.9 83.6 L560 79.3 L569.3 71.4 L573.6 69.6 L578.2 67.1" fill="none" stroke="#f77c22" stroke-width="2.8" stroke-linecap="round" stroke-linejoin="round"/>
<path d="M467.2 251.8 L471.1 253 L477 253 L480 248.8 L484.8 244 L488.9 239.3 L491.9 236.3 L494.6 235.4" fill="none" stroke="#f77c22" stroke-width="3.2" stroke-linecap="round" stroke-linejoin="round"/>
</svg>
</body></html>
